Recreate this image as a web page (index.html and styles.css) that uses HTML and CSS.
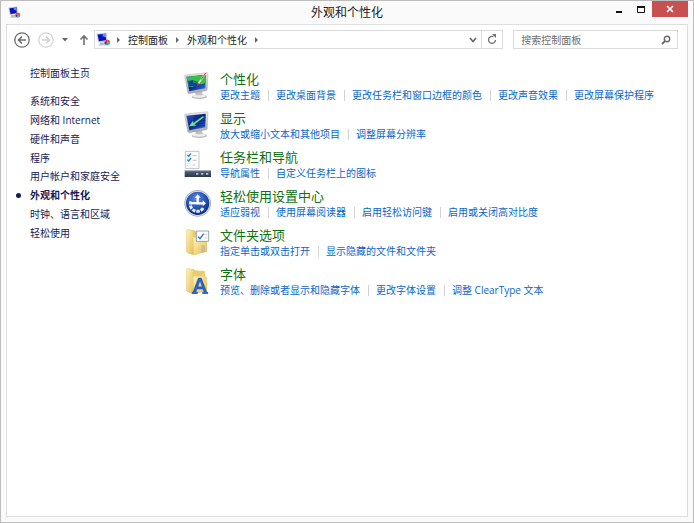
FILE: index.html
```html
<!DOCTYPE html>
<html lang="zh-CN">
<head>
<meta charset="utf-8">
<meta name="viewport" content="width=device-width, initial-scale=1">
<title>外观和个性化</title>
<link rel="stylesheet" href="styles.css">
</head>
<body>
<svg class="defs" aria-hidden="true">
  <defs>
    <linearGradient id="screen" x1="0" y1="0" x2="1" y2="1"><stop offset="0" stop-color="#3557c8"/><stop offset=".5" stop-color="#0c2390"/><stop offset="1" stop-color="#2f7be0"/></linearGradient>
    <linearGradient id="frame" x1="0" y1="0" x2="0" y2="1"><stop offset="0" stop-color="#e8e8e5"/><stop offset="1" stop-color="#a6a8aa"/></linearGradient>
    <linearGradient id="bar" x1="0" y1="0" x2="0" y2="1"><stop offset="0" stop-color="#7d8ba3"/><stop offset=".3" stop-color="#46546f"/><stop offset="1" stop-color="#29364f"/></linearGradient>
    <linearGradient id="folder" x1="0" y1="0" x2="1" y2="1"><stop offset="0" stop-color="#fff3b8"/><stop offset="1" stop-color="#e3bd57"/></linearGradient>
    <radialGradient id="ease" cx=".45" cy=".3" r=".7"><stop offset="0" stop-color="#5f8ce0"/><stop offset=".6" stop-color="#2150b4"/><stop offset="1" stop-color="#0d2c80"/></radialGradient>
    <symbol id="mini" viewBox="0 0 36 36">
      <path d="M1 4 26 1l1 21-22 3z" fill="#c9cbc4"/><path d="M4 6 24 4v16L7 22z" fill="#0a12c0"/>
      <path d="M16 5 24 4v9l-8-3z" fill="#6f8fe8"/>
      <path d="M9 25h12l2 6H8z" fill="#b4b6b6"/><path d="M6 30h19v3H6z" fill="#d4d4d2"/>
      <circle cx="27" cy="25" r="7" fill="#f4ece8"/>
      <path d="M27 25v-7a7 7 0 0 0-6 4z" fill="#e3263b"/><path d="M27 25v-7a7 7 0 0 1 7 6z" fill="#e24b28"/><path d="m27 25 7-1a7 7 0 0 1-3 7z" fill="#2fc04a"/><path d="m27 25 4 6a7 7 0 0 1-7 0z" fill="#28a9cf"/><path d="m27 25-3 6a7 7 0 0 1-3-9z" fill="#6720b6"/>
    </symbol>
    <symbol id="crumb" viewBox="0 0 5 8"><path d="M1 1v6l3-3z" fill="#666"/></symbol>
    <symbol id="monitor" viewBox="24 24 84 84">
      <ellipse cx="70" cy="98" rx="23" ry="7" fill="#b9babc"/><ellipse cx="69" cy="96" rx="20" ry="5" fill="#eeeeec"/>
      <path d="m56 80 21-4 3 18H60z" fill="#c0c1c3"/>
      <path d="M27 33 93 26q3 0 3 3l-2 47q0 3-3 4l-51 9q-4 0-5-4l-9-48q0-4 1-4z" fill="url(#frame)" stroke="#999" />
      <path d="m31 38 58-6-1 41-48 9z" fill="url(#screen)"/>
    </symbol>
    <symbol id="folderback" viewBox="24 18 84 84">
      <path d="M34 28 52 23l6 5 28 2 7 58-35 11-24-7z" fill="#e9cd74"/>
      <path d="M31 25q0-3 4-3l14 3q4 1 4 5v66q0 3-3 2L34 92q-3-1-3-4z" fill="url(#folder)" stroke="#d9b75c"/>
      <path d="M52 46h37q4 0 4 4v39L53 98z" fill="url(#folder)"/>
    </symbol>
  </defs>
</svg>
<div class="window">
  <header class="titlebar">
    <svg class="app-icon" aria-hidden="true"><use href="#mini"/></svg>
    <h1 class="title">外观和个性化</h1>
    <div class="controls">
      <button class="control" type="button" aria-label="最小化"><svg width="10" height="10"><path d="M2 8h6" stroke="#111" stroke-width="2"/></svg></button>
      <button class="control" type="button" aria-label="最大化"><svg width="10" height="10"><path d="M1.500 2.500h7v6h-7z" fill="none" stroke="#111"/><path d="M1 2h8v2H1z" fill="#111"/></svg></button>
      <button class="control close" type="button" aria-label="关闭"><svg width="8" height="8"><path d="m1 1 6 6M7 1 1 7" stroke="#fff" stroke-width="1.600"/></svg></button>
    </div>
  </header>
  <div class="client">
    <div class="toolbar">
      <button class="nav back" type="button" aria-label="后退"><svg width="18" height="18" fill="none" stroke="#707070"><circle cx="9" cy="9" r="7.200" stroke-width="1.300"/><path d="M13 9H6m3-3.500L5.500 9 9 12.500" stroke-width="1.700"/></svg></button>
      <button class="nav forward" type="button" aria-label="前进"><svg width="18" height="18" fill="none" stroke="#d2d2d2"><circle cx="9" cy="9" r="7.200" stroke-width="1.200"/><path d="M5 9h7M9 5.500 12.500 9 9 12.500" stroke-width="1.600"/></svg></button>
      <button class="nav recent" type="button" aria-label="最近位置"><svg width="8" height="5"><path d="M1 1h6L4 4.500z" fill="#666"/></svg></button>
      <button class="nav up" type="button" aria-label="上移"><svg width="10" height="12" fill="none" stroke="#707070" stroke-width="1.600"><path d="M5 11V2M1.500 5.500 5 2l3.500 3.500"/></svg></button>
      <nav class="address" aria-label="地址">
        <svg class="place-icon" aria-hidden="true"><use href="#mini"/></svg>
        <svg class="crumb-arrow" aria-hidden="true"><use href="#crumb"/></svg>
        <a href="#">控制面板</a>
        <svg class="crumb-arrow" aria-hidden="true"><use href="#crumb"/></svg>
        <a href="#">外观和个性化</a>
        <svg class="crumb-arrow" aria-hidden="true"><use href="#crumb"/></svg>
        <span class="fill"></span>
        <button class="address-button" type="button" aria-label="历史记录"><svg width="8" height="6"><path d="m1 1 3 3.500L7 1" fill="none" stroke="#666" stroke-width="1.600"/></svg></button>
        <button class="address-button refresh" type="button" aria-label="刷新"><svg width="10" height="11"><path d="M6.500 2.700A3.500 3.500 0 1 0 8.500 6" fill="none" stroke="#707070" stroke-width="1.300"/><path d="M5 0h4v4z" fill="#707070"/></svg></button>
      </nav>
      <form class="search">
        <input class="search-input" type="search" aria-label="搜索控制面板" placeholder="搜索控制面板">
        <button class="search-button" type="button" aria-label="搜索"><svg width="10" height="10" fill="none" stroke="#666"><circle cx="6" cy="4" r="2.700" stroke-width="1.400"/><path d="M4 6 1 9" stroke-width="1.800"/></svg></button>
      </form>
    </div>
    <div class="content">
      <nav class="sidebar" aria-label="控制面板类别">
        <a class="home" href="#">控制面板主页</a>
        <ul class="categories">
          <li><a href="#">系统和安全</a></li>
          <li><a href="#">网络和 Internet</a></li>
          <li><a href="#">硬件和声音</a></li>
          <li><a href="#">程序</a></li>
          <li><a href="#">用户帐户和家庭安全</a></li>
          <li class="current"><a href="#" aria-current="page">外观和个性化</a></li>
          <li><a href="#">时钟、语言和区域</a></li>
          <li><a href="#">轻松使用</a></li>
        </ul>
      </nav>
      <main class="groups">
        <section class="group">
          <svg class="icon" viewBox="24 24 84 84" aria-hidden="true">
            <use href="#monitor" x="24" y="24" width="84" height="84"/>
            <path d="m32 39 57-7-1 24q-12 8-20 3-9-3-12 7-8 4-17 2z" fill="#35c343"/>
            <path d="m36 51 15-3 2 9 9-2 3 12-12 4-2-6-11 3z" fill="#123dac"/>
            <path d="m48 48 18 16 22-30-17 21z" fill="#187c38"/>
            <path d="M89 27 67 59" stroke="#f1eadf" stroke-width="5"/><path d="M89 27 75 47" stroke="#c93835" stroke-width="3"/><path d="m66 57 6 4-10 8z" fill="#ad3440"/>
          </svg>
          <div class="group-body"><h2><a href="#">个性化</a></h2>
            <ul class="tasks"><li><a href="#">更改主题</a></li><li><a href="#">更改桌面背景</a></li><li><a href="#">更改任务栏和窗口边框的颜色</a></li><li><a href="#">更改声音效果</a></li><li><a href="#">更改屏幕保护程序</a></li></ul></div>
        </section>
        <section class="group">
          <svg class="icon" viewBox="24 24 84 84" aria-hidden="true">
            <use href="#monitor" x="24" y="24" width="84" height="84"/>
            <path d="m55 40 34-3M54 47l35-3M66 55l22-2M64 63l23-3M58 71l29-4" stroke="#071b6b" stroke-width="2"/>
            <path d="m80 40-28 20-1-7-12 17 22-2-5-4 29-22z" fill="#72e58c" stroke="#239b55"/>
          </svg>
          <div class="group-body"><h2><a href="#">显示</a></h2>
            <ul class="tasks"><li><a href="#">放大或缩小文本和其他项目</a></li><li><a href="#">调整屏幕分辨率</a></li></ul></div>
        </section>
        <section class="group">
          <svg class="icon" viewBox="24 18 84 84" aria-hidden="true">
            <path d="M28 22h41v52H28z" fill="#fafafa" stroke="#a6a9ac" stroke-width="2"/>
            <path d="M34 31h7v7h-7zm0 14h7v7h-7zm0 14h7v7h-7z" fill="#fff" stroke="#b8c0c8"/>
            <path d="m34 33 4 4 7-9M34 47l4 4 7-9" fill="none" stroke="#2789d4" stroke-width="4"/>
            <path d="M50 35h12M50 49h12M50 63h8" stroke="#a9afb5" stroke-width="2"/>
            <path d="M26 79h79v20H26z" fill="url(#bar)"/>
            <path d="M60 87h7v5h-7zm15 0h7v5h-7zm15 0h7v5h-7z" fill="#b6c1cf"/>
          </svg>
          <div class="group-body"><h2><a href="#">任务栏和导航</a></h2>
            <ul class="tasks"><li><a href="#">导航属性</a></li><li><a href="#">自定义任务栏上的图标</a></li></ul></div>
        </section>
        <section class="group">
          <svg class="icon" viewBox="24 135 84 84" aria-hidden="true">
            <circle cx="65" cy="178" r="39" fill="#e4e9ef" stroke="#858e9d" stroke-width="2"/>
            <circle cx="65" cy="178" r="35" fill="url(#ease)"/>
            <path d="M65 158v20h18" fill="none" stroke="#fff" stroke-width="7"/>
            <path d="m56 161 9-10 9 10zm24 8 10 9-10 9z" fill="#fff"/>
            <path d="M45 172a21 21 0 1 0 38 18" fill="none" stroke="#e7efff" stroke-width="9" stroke-dasharray="10 3"/>
            <path d="M45 174h18v7H45z" fill="#fff"/>
          </svg>
          <div class="group-body"><h2><a href="#">轻松使用设置中心</a></h2>
            <ul class="tasks"><li><a href="#">适应弱视</a></li><li><a href="#">使用屏幕阅读器</a></li><li><a href="#">启用轻松访问键</a></li><li><a href="#">启用或关闭高对比度</a></li></ul></div>
        </section>
        <section class="group">
          <svg class="icon" viewBox="24 18 84 84" aria-hidden="true">
            <use href="#folderback" x="24" y="18" width="84" height="84"/>
            <path d="M61 27h37v31H61z" fill="#fff" stroke="#667f94" stroke-width="2"/>
            <path d="m66 44 6 6 11-15" fill="none" stroke="#287bb8" stroke-width="4"/><path d="M86 38h8M86 48h8" stroke="#a6afb5" stroke-width="2"/>
            <path d="M76 70q10-3 11 5l-1 15-11 3z" fill="#c5bda5"/>
          </svg>
          <div class="group-body"><h2><a href="#">文件夹选项</a></h2>
            <ul class="tasks"><li><a href="#">指定单击或双击打开</a></li><li><a href="#">显示隐藏的文件和文件夹</a></li></ul></div>
        </section>
        <section class="group">
          <svg class="icon" viewBox="24 135 84 84" aria-hidden="true">
            <use href="#folderback" x="24" y="135" width="84" height="84"/>
            <path d="M48 215h17v-4l-5-1 3-9h18l3 9-5 1v4h17v-4l-4-2-16-41h-9l-16 42-3 1zm18-21 6-18 6 18z" fill="#2861c8" fill-rule="evenodd" stroke="#174391"/>
          </svg>
          <div class="group-body"><h2><a href="#">字体</a></h2>
            <ul class="tasks"><li><a href="#">预览、删除或者显示和隐藏字体</a></li><li><a href="#">更改字体设置</a></li><li><a href="#">调整 ClearType 文本</a></li></ul></div>
        </section>
      </main>
    </div>
  </div>
</div>
</body>
</html>
```
FILE: styles.css
```css
* { box-sizing: border-box; }
body {
  margin: 0;
  font-family: "Open Sans", "Noto Sans CJK SC", sans-serif;
  font-size: 10px;
  line-height: 14px;
  color: #222;
}
a { color: inherit; text-decoration: none; }
a:hover { text-decoration: underline; }
ul { margin: 0; padding: 0; list-style: none; }
h1, h2 { margin: 0; font-weight: 400; }
svg { display: block; flex: none; }
button { margin: 0; padding: 0; border: 0; background: none; display: flex; align-items: center; justify-content: center; }
.defs { position: absolute; width: 0; height: 0; }

.window {
  display: flex;
  flex-direction: column;
  min-height: 100vh;
  padding: 0 5px 5px;
  border: 1px solid #bdbdbd;
  background: #fafafa;
}
.titlebar {
  display: grid;
  grid-template-columns: 1fr auto 1fr;
  align-items: center;
  height: 23px;
}
.app-icon { width: 13px; height: 13px; margin-left: 2px; }
.title { font-size: 12px; line-height: 20px; }
.controls { display: flex; justify-content: flex-end; align-self: start; }
.control { width: 22px; height: 16px; }
.control.close { width: 36px; background: #c75050; }

.client {
  flex: 1;
  border: 1px solid #dedede;
  background: #fff;
}
.toolbar {
  display: flex;
  align-items: center;
  padding: 5px 9px 5px 6px;
}
.nav { height: 18px; }
.back, .forward { width: 18px; }
.forward { margin-left: 6px; }
.recent { width: 8px; margin-left: 6px; }
.up { width: 10px; margin-left: 10px; }
.address {
  display: flex;
  flex: 5;
  align-items: center;
  height: 19px;
  margin-left: 5px;
  border: 1px solid #dadada;
}
.place-icon { width: 15px; height: 15px; margin: 0 5px 0 1px; }
.crumb-arrow { width: 5px; height: 8px; }
.address a { margin: 0 7px; }
.fill { flex: 1; }
.address-button { width: 16px; height: 17px; }
.refresh { width: 21px; border-left: 1px solid #dadada; }
.search {
  display: flex;
  flex: 2;
  min-width: 0;
  align-items: center;
  height: 19px;
  margin-left: 10px;
  border: 1px solid #dadada;
}
.search-input {
  flex: 1;
  min-width: 0;
  padding: 0 7px;
  border: 0;
  outline: 0;
  background: none;
  font: inherit;
}
.search-input::placeholder { color: #6d6d6d; opacity: 1; }
.search-button { width: 22px; height: 17px; }

.content {
  display: grid;
  grid-template-columns: 160px 1fr;
  gap: 17px;
  padding: 12px 10px 12px 0;
}
.sidebar { padding-left: 23px; color: #151c55; }
.home { display: block; margin-bottom: 12px; }
.categories { display: grid; grid-auto-rows: 1fr; min-height: 150px; align-items: center; }
.current { position: relative; font-weight: 700; }
.current::before {
  content: "";
  position: absolute;
  left: -14px;
  top: 5px;
  width: 5px;
  height: 5px;
  border-radius: 50%;
  background: #151c55;
}
.groups { display: flex; flex-direction: column; gap: 7px; padding-top: 4px; }
.group { display: flex; gap: 8px; }
.icon { width: 28px; height: 28px; margin-top: 2px; }
.group h2 { font-size: 13px; line-height: 18px; color: #107010; }
.tasks { display: flex; flex-wrap: wrap; color: #0a66cc; }
.tasks li { display: flex; align-items: center; white-space: nowrap; }
.tasks li + li::before {
  content: "";
  width: 1px;
  height: 11px;
  margin: 0 7px 0 8px;
  background: #d2d2d2;
}
```
